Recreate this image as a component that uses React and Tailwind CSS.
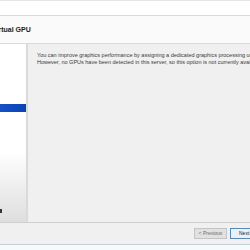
export default function App() {
  return (
    <div
      className="w-[250px] h-[250px] overflow-hidden flex flex-col bg-white"
      style={{ fontFamily: '"Liberation Sans", Arial, sans-serif' }}
    >
      {/* top strip */}
      <div className="h-[16px] shrink-0 bg-white border-t border-[#dfe6ec] border-b border-b-[#d9d9d9]" />

      {/* header */}
      <div className="h-[28px] shrink-0 bg-[#fafafa] border-b border-[#dcdcdc] flex items-center overflow-hidden pt-[1px]">
        <span className="ml-[-8px] whitespace-nowrap text-[7px] font-bold text-[#1a1a1a]">Virtual GPU</span>
      </div>

      {/* body */}
      <div className="h-[178px] shrink-0 flex">
        <div className="w-[28px] shrink-0 flex flex-col bg-gradient-to-b from-white from-60% to-[#dedede] border-r-2 border-[#dadada]">
          <div className="h-[60px] shrink-0" />
          <div className="h-[8px] shrink-0 bg-gradient-to-r from-[#1551c8] to-[#0a44b3]" />
          <div className="flex-1" />
          <div className="h-[4px] w-[2px] bg-[#333] mb-[9px]" />
        </div>
        <div className="flex-1 bg-[#f0f0f0] pt-[8px] pl-[9px] overflow-hidden">
          <p className="whitespace-nowrap text-[5.5px] leading-[7px] text-[#3a3a3a]">
            You can improve graphics performance by assigning a dedicated graphics processing unit
          </p>
          <p className="whitespace-nowrap text-[5.5px] leading-[7px] text-[#3a3a3a]">
            However, no GPUs have been detected in this server, so this option is not currently availab
          </p>
        </div>
      </div>

      {/* footer */}
      <div className="h-[23px] shrink-0 bg-[#f0f0f0] border-t border-[#cfcfcf] border-b border-b-[#b9d3e2] flex items-center justify-end gap-[3px] mr-[-12px]">
        <button className="h-[11px] w-[33px] bg-[#e1e1e1] border border-[#c4c4c4] text-[5px] text-[#6d6d6d] leading-none">
          &lt; Previous
        </button>
        <button className="h-[11px] w-[32px] bg-[#e5f1fb] border border-[#3c8fd9] text-[5px] text-[#222] leading-none text-left pl-[8px]">
          Next
        </button>
      </div>
      <div className="flex-1 bg-[#f7f9fa]" />
    </div>
  );
}
